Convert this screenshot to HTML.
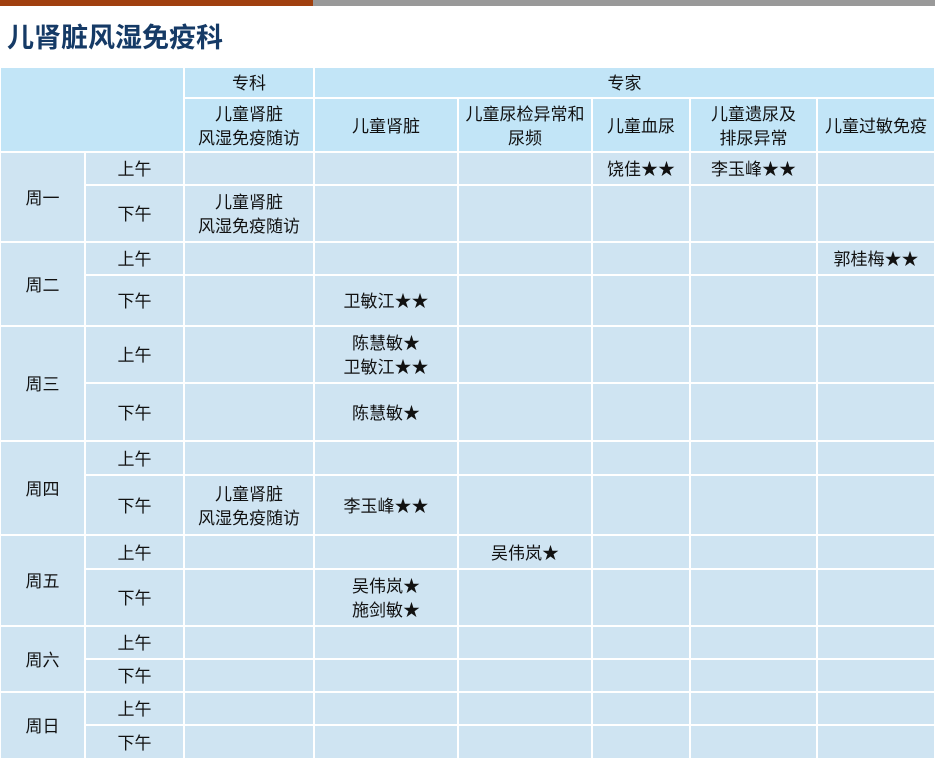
<!DOCTYPE html>
<html><head><meta charset="utf-8"><style>
body{margin:0;width:935px;height:759px;overflow:hidden;background:#fff;font-family:"Liberation Sans","Noto Sans CJK SC",sans-serif;position:relative}
.bar1{position:absolute;left:0;top:0;width:313px;height:6px;background:#a0400f}
.bar2{position:absolute;left:313px;top:0;width:622px;height:6px;background:#999}
h1{position:absolute;left:7px;top:20px;margin:0;font-size:27px;font-weight:bold;color:#153a66;line-height:36px}
.g{position:absolute;left:0;top:67px;width:935px;height:692px;display:grid;
grid-template-columns:85px 99px 130px 144px 134px 98px 127px 118px;
grid-template-rows:31px 54px 33px 57px 33px 51px 57px 58px 34px 60px 34px 57px 33px 33px 33px 34px}
.g>div{box-sizing:border-box;border:1px solid #fff;background:#cfe4f2;display:flex;align-items:center;justify-content:center;text-align:center;font-size:17px;line-height:24px;color:#111;padding-top:3px}
.g>div.h{background:#c2e5f7}
.d{grid-row:span 2}
</style></head><body>
<div class="bar1"></div><div class="bar2"></div>
<h1>儿肾脏风湿免疫科</h1>
<div class="g">
<div class="h" style="grid-column:1/3;grid-row:1/3"></div>
<div class="h">专科</div>
<div class="h" style="grid-column:4/9">专家</div>
<div class="h">儿童肾脏<br>风湿免疫随访</div>
<div class="h">儿童肾脏</div>
<div class="h">儿童尿检异常和<br>尿频</div>
<div class="h">儿童血尿</div>
<div class="h">儿童遗尿及<br>排尿异常</div>
<div class="h">儿童过敏免疫</div>

<div class="d">周一</div><div>上午</div><div></div><div></div><div></div><div>饶佳★★</div><div>李玉峰★★</div><div></div>
<div>下午</div><div>儿童肾脏<br>风湿免疫随访</div><div></div><div></div><div></div><div></div><div></div>

<div class="d">周二</div><div>上午</div><div></div><div></div><div></div><div></div><div></div><div>郭桂梅★★</div>
<div>下午</div><div></div><div>卫敏江★★</div><div></div><div></div><div></div><div></div>

<div class="d">周三</div><div>上午</div><div></div><div>陈慧敏★<br>卫敏江★★</div><div></div><div></div><div></div><div></div>
<div>下午</div><div></div><div>陈慧敏★</div><div></div><div></div><div></div><div></div>

<div class="d">周四</div><div>上午</div><div></div><div></div><div></div><div></div><div></div><div></div>
<div>下午</div><div>儿童肾脏<br>风湿免疫随访</div><div>李玉峰★★</div><div></div><div></div><div></div><div></div>

<div class="d">周五</div><div>上午</div><div></div><div></div><div>吴伟岚★</div><div></div><div></div><div></div>
<div>下午</div><div></div><div>吴伟岚★<br>施剑敏★</div><div></div><div></div><div></div><div></div>

<div class="d">周六</div><div>上午</div><div></div><div></div><div></div><div></div><div></div><div></div>
<div>下午</div><div></div><div></div><div></div><div></div><div></div><div></div>

<div class="d">周日</div><div>上午</div><div></div><div></div><div></div><div></div><div></div><div></div>
<div>下午</div><div></div><div></div><div></div><div></div><div></div><div></div>
</div>
</body></html>
